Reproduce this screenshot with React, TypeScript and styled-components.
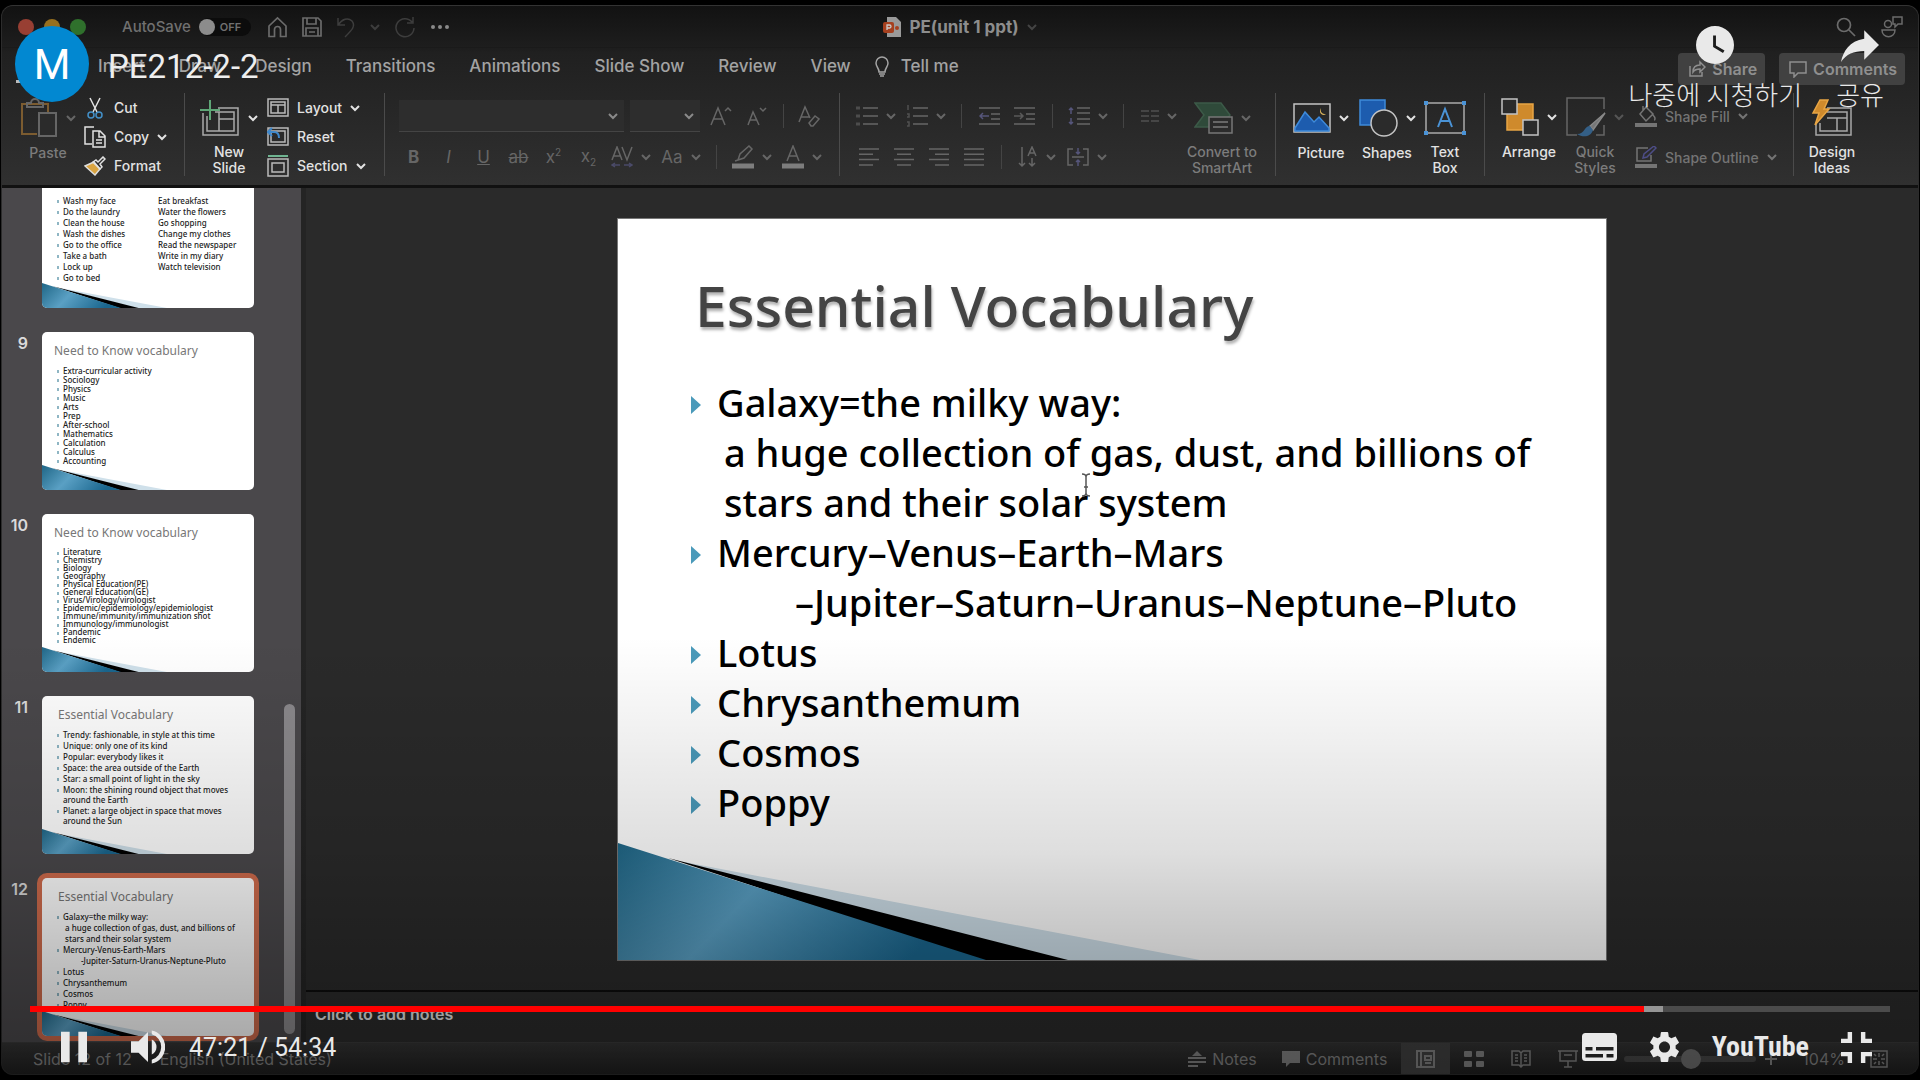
import React from "react";
import styled, { createGlobalStyle } from "styled-components";

const ui = `Inter, "Liberation Sans", sans-serif`;
const slideFont = `"Noto Sans", "Open Sans", sans-serif`;
const player = `Roboto, "Noto Sans CJK KR", sans-serif`;

const Global = createGlobalStyle`
  * { box-sizing: border-box; }
  html, body, #root { height: 100%; margin: 0; background: #000; }
  button, select, input { font: inherit; color: inherit; background: none; border: 0; padding: 0; margin: 0; }
  h1, h2, ul, p { margin: 0; padding: 0; font-weight: inherit; }
  ul { list-style: none; }
  svg { display: block; flex: none; }
`;

const Screen = styled.div`
  position: relative;
  height: 100vh;
  padding: 5px 1px;
  background: #000;
  overflow: hidden;
  font-family: ${ui};
`;
const Window = styled.div`
  height: 100%;
  display: flex;
  flex-direction: column;
  border-radius: 12px;
  border: 1px solid #2c2c2c;
  border-top-color: #333;
  overflow: hidden;
  background: #2a2a2a;
`;
const Header = styled.header`
  flex: none;
  background: linear-gradient(#121212, #1e1e1e 24%, #202020 26%, #303030);
  border-bottom: 3px solid #111;
`;
const TitleBar = styled.div`
  height: 42px;
  display: grid;
  grid-template-columns: 1fr auto 1fr;
  align-items: center;
  border-bottom: 1px solid #1a1a1a;
`;
const TitleSide = styled.div<{ $end?: boolean }>`
  display: flex;
  align-items: center;
  gap: 16px;
  padding: 0 ${(p) => (p.$end ? 14 : 16)}px;
  justify-content: ${(p) => (p.$end ? "flex-end" : "flex-start")};
  color: #6b6b6b;
`;
const Lights = styled.div`
  display: flex;
  gap: 10px;
  margin-right: 20px;
`;
const Light = styled.button<{ $c: string }>`
  width: 16px;
  height: 16px;
  border-radius: 50%;
  background: ${(p) => p.$c};
`;
const AutoSave = styled.label`
  display: flex;
  align-items: center;
  gap: 8px;
  font-size: 15px;
  font-weight: 500;
  color: #707070;
`;
const Toggle = styled.span`
  position: relative;
  width: 52px;
  height: 18px;
  border-radius: 9px;
  background: #0c0c0c;
  font-size: 11px;
  font-weight: 600;
  line-height: 18px;
  padding-left: 21px;
  input {
    position: absolute;
    inset: 0;
    width: 16px;
    height: 16px;
    appearance: none;
    border-radius: 50%;
    background: #8c8c8c;
    margin: 1px 0;
  }
`;
const Icons = styled.div`
  display: flex;
  align-items: center;
  gap: 14px;
`;
const IconBtn = styled.button<{ $c?: string }>`
  display: grid;
  place-items: center;
  color: ${(p) => p.$c || "inherit"};
`;
const DocTitle = styled.h1`
  display: flex;
  align-items: center;
  gap: 8px;
  font-size: 17px;
  font-weight: 700;
  color: #8d8d8d;
`;
const TabBar = styled.nav`
  height: 41px;
  display: flex;
  align-items: flex-start;
  justify-content: space-between;
  padding: 1px 13px 0 14px;
`;
const Tabs = styled.div`
  display: flex;
  gap: 34px;
  font-size: 17px;
  font-weight: 500;
  color: #a3a3a3;
  & > :last-child { margin-left: -10px; }
`;
const Tab = styled.button<{ $on?: boolean }>`
  display: flex;
  align-items: center;
  gap: 12px;
  height: 34px;
  border-bottom: 3px solid ${(p) => (p.$on ? "#bbb" : "transparent")};
  border-top: 3px solid transparent;
`;
const Actions = styled.div`
  display: flex;
  gap: 14px;
  padding-top: 4px;
`;
const Action = styled.button`
  display: flex;
  align-items: center;
  gap: 6px;
  height: 32px;
  padding: 0 8px 0 10px;
  border-radius: 4px;
  background: #414141;
  color: #8f8f8f;
  font-size: 16px;
  font-weight: 600;
`;
const Ribbon = styled.div`
  display: flex;
  height: 96px;
  padding-top: 4px;
`;
const Group = styled.section<{ $w?: number; $pl: number; $gap?: number }>`
  display: flex;
  flex: none;
  width: ${(p) => (p.$w ? p.$w + "px" : "auto")};
  padding-left: ${(p) => p.$pl}px;
  gap: ${(p) => p.$gap || 0}px;
  height: 83px;
  border-right: ${(p) => (p.$w ? "1px solid #4b4b4b" : "0")};
`;
const BigButton = styled.button<{ $w: number; $dim?: boolean }>`
  width: ${(p) => p.$w}px;
  display: flex;
  flex-direction: column;
  align-items: center;
  font-size: 14px;
  line-height: 16px;
  font-weight: 500;
  color: ${(p) => (p.$dim ? "#7c7c7c" : "#e2e2e2")};
`;
const BigIcon = styled.span`
  height: 50px;
  display: flex;
  align-items: center;
  gap: 8px;
  margin-bottom: 2px;
`;
const Column = styled.div`
  display: flex;
  flex-direction: column;
`;
const Small = styled.button<{ $h?: number; $dim?: boolean }>`
  flex: none;
  height: ${(p) => p.$h || 29}px;
  display: flex;
  align-items: center;
  gap: 8px;
  font-size: 14px;
  font-weight: 500;
  white-space: nowrap;
  color: ${(p) => (p.$dim ? "#747474" : "#e2e2e2")};
`;
const Row = styled.div<{ $h: number }>`
  display: flex;
  align-items: center;
  height: ${(p) => p.$h}px;
  color: #666;
`;
const Combo = styled.label<{ $w: number }>`
  display: grid;
  grid-template-columns: 1fr 16px;
  align-items: center;
  width: ${(p) => p.$w}px;
  height: 32px;
  margin: 0 3px;
  background: #2d2d2d;
  border-bottom: 1px solid #444;
  color: #8a8a8a;
  select {
    appearance: none;
    width: 100%;
    height: 30px;
  }
`;
const Cell = styled.button<{ $w?: number }>`
  width: ${(p) => p.$w || 35}px;
  display: flex;
  align-items: center;
  justify-content: center;
  gap: 8px;
  font-size: 17px;
  line-height: 20px;
  sup, sub {
    font-size: 10px;
    line-height: 10px;
  }
`;
const MiniSep = styled.span`
  width: 1px;
  height: 24px;
  margin: 0 10px;
  background: #444;
`;
const Body = styled.div`
  flex: 1;
  min-height: 0;
  display: flex;
`;
const Sidebar = styled.aside`
  flex: none;
  width: 304px;
  display: flex;
  background: #4a484b;
  border-right: 5px solid #242424;
  overflow: hidden;
`;
const ThumbList = styled.div`
  flex: 1;
  display: flex;
  flex-direction: column;
  justify-content: flex-end;
  gap: 24px;
  padding: 0 0 6px 8px;
`;
const ThumbRow = styled.div`
  flex: none;
  display: grid;
  grid-template-columns: 32px 212px;
`;
const ThumbNo = styled.span`
  padding-right: 14px;
  text-align: right;
  font-size: 16px;
  line-height: 22px;
  font-weight: 600;
  color: #dadada;
`;
const Thumb = styled.button<{ $on?: boolean }>`
  position: relative;
  display: flex;
  flex-direction: column;
  align-items: stretch;
  justify-content: flex-start;
  height: 158px;
  border-radius: 5px;
  background: #fff;
  box-shadow: ${(p) => (p.$on ? "0 0 0 5px #cf6b4c" : "none")};
  text-align: left;
  font-family: ${slideFont};
  color: #1c1c1c;
`;
const ThumbContent = styled.div`
  position: relative;
`;
const ThumbTitle = styled.h2<{ $pl: number }>`
  padding: 10px 0 0 ${(p) => p.$pl}px;
  font-size: 12px;
  line-height: 18px;
  color: #777;
`;
const ThumbText = styled.ul<{ $lh: number; $gap?: number }>`
  display: flex;
  flex-direction: column;
  gap: ${(p) => p.$gap || 0}px;
  padding: 6px 0 0 15px;
  font-size: 8px;
  font-weight: 500;
  line-height: ${(p) => p.$lh}px;
`;
const ThumbItem = styled.li<{ $indent?: number }>`
  display: grid;
  grid-template-columns: 6px 1fr;
  white-space: pre;
  padding-left: ${(p) => p.$indent || 0}px;
`;
const Tick = styled.i`
  align-self: start;
  width: 2px;
  height: 3px;
  margin-top: 4px;
  background: #8fb6c4;
`;
const TwoCols = styled.div`
  position: relative;
  display: grid;
  grid-template-columns: 95px 1fr;
  padding-top: 40px;
`;
const ThumbWave = styled.div`
  position: absolute;
  inset: 0;
  border-radius: 5px;
  overflow: hidden;
`;
const ScrollTrack = styled.div`
  width: 18px;
  display: flex;
  flex-direction: column;
  justify-content: flex-end;
  padding: 0 6px 8px 1px;
`;
const ScrollThumb = styled.div`
  height: 39%;
  border-radius: 6px;
  background: #8b898c;
`;
const Editor = styled.main`
  flex: 1;
  min-width: 0;
  display: flex;
  flex-direction: column;
`;
const Stage = styled.div`
  flex: 1;
  min-height: 0;
  display: flex;
  justify-content: center;
  align-items: center;
  border-bottom: 2px solid #0d0d0d;
`;
const Slide = styled.article`
  position: relative;
  width: 988px;
  max-width: 94%;
  aspect-ratio: 4 / 3;
  background: #fff;
  outline: 1px solid #777;
  font-family: ${slideFont};
  color: #000;
`;
const Wave = styled.svg`
  position: absolute;
  left: 0;
  bottom: 0;
  width: 100%;
  height: 100%;
`;
const SlideTitle = styled.h2`
  position: relative;
  padding: 46px 0 0 77px;
  font-size: 57px;
  font-weight: 500;
  line-height: 80px;
  color: #444;
  text-shadow: 1px 3px 3px rgba(0, 0, 0, 0.3);
`;
const SlideList = styled.ul`
  position: relative;
  padding: 32px 0 0 73px;
  font-size: 38px;
  line-height: 50px;
  font-weight: 500;
`;
const SlideItem = styled.li<{ $indent?: number }>`
  display: grid;
  grid-template-columns: 26px 1fr;
  align-items: center;
  white-space: pre;
  padding-left: ${(p) => p.$indent || 0}px;
`;
const Bullet = styled.i`
  width: 0;
  height: 0;
  margin-top: 7px;
  border: 9px solid transparent;
  border-left: 10px solid #4a9aba;
  border-right: 0;
`;
const Caret = styled.svg`
  position: absolute;
  left: 462px;
  top: 254px;
`;
const Notes = styled.div`
  flex: none;
  height: 50px;
  padding: 0 9px;
  background: #2b2b2b;
  input {
    width: 100%;
    height: 44px;
    font-size: 16px;
    font-weight: 600;
  }
  input::placeholder { color: #e6e6e6; opacity: 1; }
`;
const Status = styled.footer`
  flex: none;
  height: 32px;
  display: flex;
  justify-content: space-between;
  padding: 0 30px 0 31px;
  background: linear-gradient(#343434, #202020);
  border-top: 1px solid #3a3a3a;
  font-size: 16px;
  color: #858585;
`;
const StatusPart = styled.div<{ $gap: number }>`
  display: flex;
  align-items: center;
  gap: ${(p) => p.$gap}px;
`;
const StatusBtn = styled.button<{ $on?: boolean }>`
  height: 31px;
  display: flex;
  align-items: center;
  justify-content: center;
  gap: 6px;
  min-width: ${(p) => (p.$on ? 49 : 20)}px;
  background: ${(p) => (p.$on ? "#424242" : "none")};
`;
const ViewBtns = styled.div`
  display: flex;
  align-items: center;
  gap: 27px;
  margin-left: -11px;
  & > :first-child { margin-right: -13px; }
`;
const Zoom = styled.div`
  display: flex;
  align-items: center;
  gap: 9px;
  input {
    appearance: none;
    width: 132px;
    height: 6px;
    border-radius: 3px;
    background: #484848;
  }
  input::-webkit-slider-thumb {
    appearance: none;
    width: 20px;
    height: 20px;
    border-radius: 50%;
    background: #707070;
  }
`;

const Overlay = styled.div`
  position: absolute;
  inset: 0;
  display: flex;
  flex-direction: column;
  justify-content: space-between;
  font-family: ${player};
  color: #e9e9e9;
  background: linear-gradient(
    transparent 59%,
    rgba(0, 0, 0, 0.13) 79%,
    rgba(0, 0, 0, 0.25) 89%,
    rgba(0, 0, 0, 0.38)
  );
`;
const TopBar = styled.div`
  display: flex;
  justify-content: space-between;
  padding: 26px 36px 0 15px;
`;
const VideoInfo = styled.a`
  display: flex;
  align-items: center;
  align-self: flex-start;
  gap: 19px;
  color: #eee;
  text-decoration: none;
`;
const Avatar = styled.span`
  width: 74px;
  height: 76px;
  border-radius: 50%;
  background: #0288d1;
  color: #fff;
  font-size: 42px;
  line-height: 78px;
  text-align: center;
`;
const VideoTitle = styled.span`
  padding-top: 6px;
  font-size: 33px;
  line-height: 38px;
`;
const TopActions = styled.div`
  display: flex;
  align-items: flex-start;
  gap: 34px;
`;
const TopAction = styled.button`
  display: flex;
  flex-direction: column;
  align-items: center;
  gap: 14px;
  font-size: 26px;
  line-height: 36px;
  font-weight: 300;
`;
const Seek = styled.input`
  display: block;
  appearance: none;
  width: calc(100% - 60px);
  height: 6px;
  margin: 0 30px 2px;
  background: linear-gradient(90deg, #f00 86.8%, #959595 86.8%, #959595 87.8%, #4b4b4b 87.8%);
  &::-webkit-slider-thumb { appearance: none; width: 0; height: 0; }
`;
const Controls = styled.div`
  height: 66px;
  display: flex;
  align-items: center;
  justify-content: space-between;
  padding: 0 48px 0 61px;
`;
const ControlSet = styled.div<{ $gap: number }>`
  display: flex;
  align-items: center;
  gap: ${(p) => p.$gap}px;
`;
const Time = styled.span`
  font-size: 25px;
  margin-left: -20px;
`;
const Brand = styled.a`
  font-family: "Roboto Condensed", Roboto, sans-serif;
  font-size: 28px;
  font-weight: 700;
  line-height: 32px;
  color: #e9e9e9;
  text-decoration: none;
`;

type IconProps = { w: number; h: number; box?: string; sw?: number; fill?: string; stroke?: string; children: React.ReactNode };
const Ic = ({ w, h, box, sw = 1.5, fill = "none", stroke = "currentColor", children }: IconProps) => (
  <svg width={w} height={h} viewBox={box || `0 0 ${w} ${h}`} fill={fill} stroke={stroke} strokeWidth={sw} aria-hidden="true">
    {children}
  </svg>
);
const Chev = ({ c = "currentColor" }: { c?: string }) => (
  <Ic w={10} h={8} sw={2} stroke={c}><path d="M1 2l4 4 4-4" /></Ic>
);
const Lines = ({ xs }: { xs: [number, number][] }) => (
  <Ic w={22} h={20}>{xs.map(([a, b], i) => <path key={i} d={`M${a} ${2 + i * 5.3}H${b}`} />)}</Ic>
);
const SlideIcon = () => (
  <>
    <rect x="1" y="1" width="20" height="17" />
    <rect x="4" y="4" width="14" height="11" />
  </>
);

const WaveArt = ({ id }: { id: string }) => (
  <Wave viewBox="0 0 988 741" preserveAspectRatio="none" aria-hidden="true">
    <defs>
      <linearGradient id={id} x1="0" y1="0" x2="1" y2="0.3">
        <stop offset="0" stopColor="#1f6686" />
        <stop offset="0.45" stopColor="#5aa0c4" />
        <stop offset="1" stopColor="#1a668e" />
      </linearGradient>
    </defs>
    <path d="M61 642L582 741H440Z" fill="#cfe0ea" />
    <path d="M50 639L450 741H360Z" fill="#000" />
    <path d="M0 624L368 741H0Z" fill={`url(#${id})`} />
  </Wave>
);

const Items = ({ rows, lh, gap }: { rows: string[]; lh: number; gap?: number }) => (
  <ThumbText $lh={lh} $gap={gap}>
    {rows.map((r) => {
      const plain = r.startsWith("~");
      const deep = r.startsWith("~~");
      return (
        <ThumbItem key={r} $indent={deep ? 18 : 0}>
          {plain ? <span /> : <Tick />}
          <span>{r.replace(/^~+/, "")}</span>
        </ThumbItem>
      );
    })}
  </ThumbText>
);

const thumbs = [
  { n: 9, t: "Need to Know vocabulary", pl: 12, lh: 9, gap: 0, rows: ["Extra-curricular activity", "Sociology", "Physics", "Music", "Arts", "Prep", "After-school", "Mathematics", "Calculation", "Calculus", "Accounting"] },
  { n: 10, t: "Need to Know vocabulary", pl: 12, lh: 8, gap: 0, rows: ["Literature", "Chemistry", "Biology", "Geography", "Physical Education(PE)", "General Education(GE)", "Virus/Virology/virologist", "Epidemic/epidemiology/epidemiologist", "Immune/immunity/immunization shot", "Immunology/immunologist", "Pandemic", "Endemic"] },
  { n: 11, t: "Essential Vocabulary", pl: 16, lh: 10, gap: 1, rows: ["Trendy: fashionable, in style at this time", "Unique: only one of its kind", "Popular: everybody likes it", "Space: the area outside of the Earth", "Star: a small point of light in the sky", "Moon: the shining round object that moves\naround the Earth", "Planet: a large object in space that moves\naround the Sun"] },
  { n: 12, t: "Essential Vocabulary", pl: 16, lh: 10, gap: 1, rows: ["Galaxy=the milky way:", "~ a huge collection of gas, dust, and billions of", "~ stars and their solar system", "Mercury-Venus-Earth-Mars", "~~-Jupiter-Saturn-Uranus-Neptune-Pluto", "Lotus", "Chrysanthemum", "Cosmos", "Poppy"] },
];

const tabs = ["Home", "Insert", "Draw", "Design", "Transitions", "Animations", "Slide Show", "Review", "View"];

export default function App() {
  return (
    <>
      <Global />
      <Screen>
        <Window>
          <Header>
            <TitleBar>
              <TitleSide>
                <Lights>
                  <Light $c="#983f33" aria-label="Close" />
                  <Light $c="#97701f" aria-label="Minimize" />
                  <Light $c="#2f702c" aria-label="Zoom" />
                </Lights>
                <AutoSave>
                  AutoSave
                  <Toggle><input type="checkbox" />OFF</Toggle>
                </AutoSave>
                <Icons>
                  <IconBtn aria-label="Home"><Ic w={21} h={22} sw={1.7}><path d="M2 10l8.5-8 8.5 8v10.500h-5.500v-7a3 3 0 0 0-6 0v7H2z" /></Ic></IconBtn>
                  <IconBtn aria-label="Save"><Ic w={20} h={20} sw={1.7}><path d="M1 1h15l3 3v15H1zM5 1v6h9V1M4 19v-8h12v8M7 15h6" /></Ic></IconBtn>
                  <IconBtn aria-label="Undo" $c="#3d3d3d"><Ic w={20} h={22}><path d="M2 2v7h7M2 9c4-6 10-8 14-4 4 5 0 9-7 16" /></Ic></IconBtn>
                  <IconBtn aria-label="Undo history" $c="#3d3d3d"><Chev /></IconBtn>
                  <IconBtn aria-label="Redo" $c="#3d3d3d"><Ic w={22} h={22}><path d="M19 1v6h-6M18 6a9 9 0 1 0 2 6" /></Ic></IconBtn>
                  <IconBtn aria-label="More" $c="#8a8a8a"><Ic w={20} h={6} fill="currentColor" stroke="none"><circle cx="3" cy="3" r="2" /><circle cx="10" cy="3" r="2" /><circle cx="17" cy="3" r="2" /></Ic></IconBtn>
                </Icons>
              </TitleSide>
              <DocTitle>
                <Ic w={18} h={20} stroke="none">
                  <path d="M4 0h9l5 5v15H4z" fill="#9a9a9a" />
                  <rect y="5" width="11" height="11" rx="2" fill="#a6401f" />
                  <path d="M4 13V8h2.500a1.500 1.500 0 0 1 0 3H4" fill="none" stroke="#ccc" strokeWidth="1.3" />
                  <circle cx="14" cy="11" r="2" fill="#a6401f" />
                </Ic>
                PE(unit 1 ppt)
                <Chev c="#444" />
              </DocTitle>
              <TitleSide $end>
                <IconBtn aria-label="Search"><Ic w={20} h={20} sw={1.7}><circle cx="8" cy="8" r="6.5" /><path d="M13 13l6 6" /></Ic></IconBtn>
                <IconBtn aria-label="Account"><Ic w={32} h={24} box="-9 0 32 24"><circle cx="7" cy="9" r="3.5" /><path d="M1 15h13c0 9-13 9-13 0zM12 2h9v7h-4l-3 3V9h-2z" /></Ic></IconBtn>
              </TitleSide>
            </TitleBar>

            <TabBar>
              <Tabs>
                {tabs.map((t) => <Tab key={t} $on={t === "Home"}>{t}</Tab>)}
                <Tab>
                  <Ic w={14} h={21}><path d="M4 16c0-4-3-5-3-9a6 6 0 0 1 12 0c0 4-3 5-3 9zM4 18h6M5 20h4" /></Ic>
                  Tell me
                </Tab>
              </Tabs>
              <Actions>
                <Action><Ic w={18} h={18}><path d="M2 6v10h12v-4M5 12c0-5 3-7 7-7V2l5 5-5 5V9c-3 0-5 0-7 3z" /></Ic>Share</Action>
                <Action><Ic w={18} h={18}><path d="M1 2h16v11H9l-4 4v-4H1z" /></Ic>Comments</Action>
              </Actions>
            </TabBar>

            <Ribbon>
              <Group $w={183} $pl={18} $gap={8}>
                <BigButton $w={56} $dim>
                  <BigIcon>
                    <Ic w={38} h={40} sw={2}>
                      <path d="M17 36H2V6h26v8" stroke="#7c5c30" />
                      <path d="M7 9V5h4a4 4 0 0 1 8 0h4v4z" stroke="#666" />
                      <rect x="19" y="15" width="17" height="23" fill="#2b2b2b" stroke="#666" />
                    </Ic>
                    <Chev c="#666" />
                  </BigIcon>
                  Paste
                </BigButton>
                <Column>
                  <Small>
                    <Ic w={22} h={22}><path d="M6 1l7 14M16 1L9 15" /><circle cx="7" cy="18" r="3" stroke="#4390c8" /><circle cx="15" cy="18" r="3" stroke="#4390c8" /></Ic>
                    Cut
                  </Small>
                  <Small>
                    <Ic w={22} h={22}><path d="M8 18H1V1h9" /><path d="M9 5h7l5 5v11H9zM15 5v6h6M12 14h6M12 17h6" /></Ic>
                    Copy <Chev />
                  </Small>
                  <Small>
                    <Ic w={22} h={20}><path d="M1 10l9-4 6 7-5 6z" fill="#d9a441" stroke="#ddd" /><path d="M9 6l3-2 2 2 5-5 2 2-5 5 2 3-2 2z" /></Ic>
                    Format
                  </Small>
                </Column>
              </Group>

              <Group $w={200} $pl={15} $gap={9}>
                <BigButton $w={58}>
                  <BigIcon>
                    <Ic w={40} h={38} stroke="#aaa">
                      <path d="M18 9h20v27H3V14" /><path d="M15 13h19v19H7V17M19 13v19M19 20h15" />
                      <path d="M10 1v20M0 11h20" stroke="#5fa777" strokeWidth="2" />
                    </Ic>
                    <Chev />
                  </BigIcon>
                  New<br />Slide
                </BigButton>
                <Column>
                  <Small><Ic w={22} h={19} stroke="#bbb"><SlideIcon /><path d="M4 7h14M11 7v8" /></Ic>Layout <Chev /></Small>
                  <Small><Ic w={22} h={19} stroke="#bbb"><SlideIcon /><path d="M1 5h6c4 0 5 3 5 6M5 1L1 5l4 4" stroke="#3e88cc" strokeWidth="2" /></Ic>Reset</Small>
                  <Small><Ic w={22} h={23} stroke="#bbb"><path d="M1 2h20" stroke="#6fb491" strokeWidth="2" /><rect x="1" y="5" width="20" height="17" /><rect x="5" y="9" width="12" height="9" /></Ic>Section <Chev /></Small>
                </Column>
              </Group>

              <Group $w={455} $pl={11}>
                <Column>
                  <Row $h={46}>
                    <Combo $w={225}><select aria-label="Font"><option /></select><Chev /></Combo>
                    <Combo $w={70}><select aria-label="Font size"><option /></select><Chev /></Combo>
                    <Cell aria-label="Grow font"><Ic w={22} h={22}><path d="M1 20L8 3l7 17M4 14h8M15 6l3-3 3 3" /></Ic></Cell>
                    <Cell aria-label="Shrink font"><Ic w={22} h={22}><path d="M3 20l5-13 6 13M5 15h7M15 3l3 3 3-3" /></Ic></Cell>
                    <MiniSep />
                    <Cell $w={30} aria-label="Clear formatting"><Ic w={22} h={22}><path d="M1 17L7 2l5 11M3 12h8M11 18l6-7 4 3-6 7h-2z" /></Ic></Cell>
                  </Row>
                  <Row $h={36}>
                    <Cell><b>B</b></Cell>
                    <Cell><i>I</i></Cell>
                    <Cell><u>U</u></Cell>
                    <Cell><s>ab</s></Cell>
                    <Cell aria-label="Superscript"><span>x<sup>2</sup></span></Cell>
                    <Cell aria-label="Subscript"><span>x<sub>2</sub></span></Cell>
                    <Cell $w={50} aria-label="Character spacing"><Ic w={22} h={22}><path d="M1 14L6 1l5 13M3 10h6M11 1l5 13 5-13" /><path d="M1 19h8M13 19h8M4 17l-3 2 3 2M18 17l3 2-3 2" stroke="#4a4a68" /></Ic><Chev /></Cell>
                    <Cell $w={50}>Aa<Chev /></Cell>
                    <MiniSep />
                    <Cell $w={50} aria-label="Highlight"><Ic w={22} h={24}><path d="M6 15l2-6 9-8 3 3-8 9-6 2-3 1" /><path d="M0 21h22" strokeWidth="5" stroke="#7d7d7d" /></Ic><Chev /></Cell>
                    <Cell $w={50} aria-label="Font color"><Ic w={22} h={24}><path d="M5 16l6-15 6 15M7 11h8" /><path d="M0 21h22" strokeWidth="5" stroke="#7d7d7d" /></Ic><Chev /></Cell>
                  </Row>
                </Column>
              </Group>

              <Group $w={436} $pl={11}>
                <Column>
                  <Row $h={46}>
                    <Cell $w={50} aria-label="Bullets"><Ic w={22} h={22}><path d="M7 3h15M7 11h15M7 19h15" /><path d="M0 3h4M0 11h4M0 19h4" strokeWidth="3" stroke="#4c4c4c" /></Ic><Chev /></Cell>
                    <Cell $w={50} aria-label="Numbering"><Ic w={22} h={22}><path d="M7 3h15M7 11h15M7 19h15" /><path d="M2 0v5M1 9h2v3H1M1 17h2v4H1" stroke="#505050" /></Ic><Chev /></Cell>
                    <MiniSep />
                    <Cell aria-label="Decrease indent"><Ic w={21} h={20}><path d="M0 2h21M12 8h9M12 13h9M0 18h21" /><path d="M10 10H1M4 7l-3 3 3 3" stroke="#55557a" /></Ic></Cell>
                    <Cell aria-label="Increase indent"><Ic w={21} h={20}><path d="M0 2h21M12 8h9M12 13h9M0 18h21" /><path d="M0 10h9M6 7l3 3-3 3" stroke="#5a5a5a" /></Ic></Cell>
                    <MiniSep />
                    <Cell $w={50} aria-label="Line spacing"><Ic w={22} h={20}><path d="M9 2h13M9 7h13M9 13h13M9 18h13" /><path d="M3 8V2M1 4l2-2 2 2M3 12v6M1 16l2 2 2-2" stroke="#55557a" /></Ic><Chev /></Cell>
                    <MiniSep />
                    <Cell $w={50} aria-label="Columns"><Ic w={18} h={14}><path d="M0 2h8M0 7h8M0 12h8M10 2h8M10 7h8M10 12h8" stroke="#505050" /></Ic><Chev /></Cell>
                  </Row>
                  <Row $h={36}>
                    <Cell aria-label="Align left"><Lines xs={[[1, 21], [1, 15], [1, 21], [1, 15]]} /></Cell>
                    <Cell aria-label="Center"><Lines xs={[[1, 21], [4, 18], [1, 21], [4, 18]]} /></Cell>
                    <Cell aria-label="Align right"><Lines xs={[[1, 21], [7, 21], [1, 21], [7, 21]]} /></Cell>
                    <Cell aria-label="Justify"><Lines xs={[[1, 21], [1, 21], [1, 21], [1, 21]]} /></Cell>
                    <MiniSep />
                    <Cell $w={50} aria-label="Text direction"><Ic w={20} h={22}><path d="M4 1v19M1 17l3 3 3-3M10 10l4-9 4 9M11 7h6M14 12v8M11 17l3 3 3-3" /></Ic><Chev /></Cell>
                    <Cell $w={50} aria-label="Align text"><Ic w={22} h={20}><path d="M6 2H1v16h5M16 2h5v16h-5M5 10h12" /><path d="M11 1v6M11 13v6M9 5l2 2 2-2M9 15l2-2 2 2" stroke="#55557a" /></Ic><Chev /></Cell>
                  </Row>
                </Column>
                <BigButton $w={76} $dim>
                  <BigIcon>
                    <Ic w={39} h={32}><path d="M1 1h26l9 12-9 12H1l9-12z" fill="#2f4a3a" stroke="#3c5a48" /><rect x="15" y="15" width="23" height="16" fill="#2b2b2b" stroke="#777" /><path d="M19 20h15M19 25h15" /></Ic>
                    <Chev c="#666" />
                  </BigIcon>
                  Convert to<br />SmartArt
                </BigButton>
              </Group>

              <Group $w={209} $pl={12}>
                <BigButton $w={66}>
                  <BigIcon>
                    <Ic w={38} h={30}><rect x="1" y="1" width="36" height="28" stroke="#c4c4c4" /><path d="M2 25L12 9l9 10 5-5 10 11v3H2z" fill="#1d5cae" stroke="#3e8ada" /><path d="M28 5c-1 4 1 6 5 6-4 3-8-2-5-6z" fill="#d8b45c" stroke="none" /></Ic>
                    <Chev />
                  </BigIcon>
                  Picture
                </BigButton>
                <BigButton $w={66}>
                  <BigIcon>
                    <Ic w={39} h={38}><rect x="1" y="1" width="25" height="25" fill="#1d5cae" stroke="#3e8ada" /><circle cx="25" cy="24" r="13" fill="#2b2b2b" stroke="#c4c4c4" /></Ic>
                    <Chev />
                  </BigIcon>
                  Shapes
                </BigButton>
                <BigButton $w={50}>
                  <BigIcon>
                    <Ic w={42} h={34}><rect x="2" y="2" width="38" height="30" stroke="#aaa" /><path d="M14 26l7-18 7 18M16 20h10" stroke="#4a93d6" strokeWidth="2" /><path d="M0 2h4M38 2h4M0 32h4M38 32h4" stroke="#4a93d6" strokeWidth="4" /></Ic>
                  </BigIcon>
                  Text<br />Box
                </BigButton>
              </Group>

              <Group $w={309} $pl={11} $gap={7}>
                <Row $h={82}>
                  <BigButton $w={66}>
                    <BigIcon>
                      <Ic w={38} h={38}><rect x="6" y="6" width="26" height="26" fill="#cf8a2c" stroke="#e8a544" /><rect x="1" y="1" width="15" height="15" fill="#2b2b2b" stroke="#c4c4c4" /><rect x="22" y="22" width="15" height="15" fill="#2b2b2b" stroke="#c4c4c4" /></Ic>
                      <Chev />
                    </BigIcon>
                    Arrange<br />&nbsp;
                  </BigButton>
                  <BigButton $w={66} $dim>
                    <BigIcon>
                      <Ic w={40} h={40}><path d="M38 12V1H1v37h10M30 38h8V28" stroke="#666" /><path d="M39 16L24 29l3 4z" fill="#777" stroke="#888" /><path d="M24 29c-6 0-5 8-13 8 6 4 14 3 16-4z" fill="#345f86" stroke="none" /></Ic>
                      <Chev c="#555" />
                    </BigIcon>
                    Quick<br />Styles
                  </BigButton>
                </Row>
                <Column>
                  <Small $h={46} $dim><Ic w={22} h={22}><path d="M5 9l6-7 7 7-7 7zM18 10c3 3 2 5 1 5M8 6V1" /><path d="M0 20h22" strokeWidth="4" /></Ic>Shape Fill <Chev /></Small>
                  <Small $h={36} $dim><Ic w={22} h={22}><path d="M13 2H2v13h14V9" /><path d="M8 12l1-4 10-8 2 2-9 9z" stroke="#4d4d86" /><path d="M0 20h22" strokeWidth="4" /></Ic>Shape Outline <Chev /></Small>
                </Column>
              </Group>

              <Group $pl={12}>
                <BigButton $w={52}>
                  <BigIcon>
                    <Ic w={42} h={38} stroke="#a8a8a8"><path d="M16 9h24v27H5V24M16 13h20v19H9V24M16 19h20M26 19v13" /><path d="M9 1h8l-4 9h5L4 26l4-12H2z" fill="#cf8a2c" stroke="#e8a544" /></Ic>
                  </BigIcon>
                  Design<br />Ideas
                </BigButton>
              </Group>
            </Ribbon>
          </Header>

          <Body>
            <Sidebar>
              <ThumbList>
                <ThumbRow>
                  <ThumbNo />
                  <Thumb aria-label="Slide 8">
                    <ThumbWave><WaveArt id="w8" /></ThumbWave>
                    <TwoCols>
                      <Items lh={10} gap={1} rows={["Wash my face", "Do the laundry", "Clean the house", "Wash the dishes", "Go to the office", "Take a bath", "Lock up", "Go to bed"]} />
                      <Items lh={10} gap={1} rows={["~Eat breakfast", "~Water the flowers", "~Go shopping", "~Change my clothes", "~Read the newspaper", "~Write in my diary", "~Watch television"]} />
                    </TwoCols>
                  </Thumb>
                </ThumbRow>
                {thumbs.map((s) => (
                  <ThumbRow key={s.n}>
                    <ThumbNo>{s.n}</ThumbNo>
                    <Thumb $on={s.n === 12}>
                      <ThumbWave>
                        <WaveArt id={`w${s.n}`} />
                      </ThumbWave>
                      <ThumbContent>
                        <ThumbTitle $pl={s.pl}>{s.t}</ThumbTitle>
                        <Items rows={s.rows} lh={s.lh} gap={s.gap} />
                      </ThumbContent>
                    </Thumb>
                  </ThumbRow>
                ))}
              </ThumbList>
              <ScrollTrack><ScrollThumb /></ScrollTrack>
            </Sidebar>

            <Editor>
              <Stage>
                <Slide>
                  <WaveArt id="main" />
                  <SlideTitle>Essential Vocabulary</SlideTitle>
                  <SlideList>
                    <SlideItem><Bullet /><span>Galaxy=the milky way:</span></SlideItem>
                    <SlideItem $indent={7}><span /><span>a huge collection of gas, dust, and billions of</span></SlideItem>
                    <SlideItem $indent={7}><span /><span>stars and their solar system</span></SlideItem>
                    <SlideItem><Bullet /><span>Mercury–Venus–Earth–Mars</span></SlideItem>
                    <SlideItem $indent={78}><span /><span>–Jupiter–Saturn–Uranus–Neptune–Pluto</span></SlideItem>
                    {["Lotus", "Chrysanthemum", "Cosmos", "Poppy"].map((w) => (
                      <SlideItem key={w}><Bullet /><span>{w}</span></SlideItem>
                    ))}
                  </SlideList>
                  <Caret width="12" height="24" viewBox="0 0 12 24" fill="none" stroke="#555" strokeWidth="1.5">
                    <path d="M2 1c3 0 4 1 4 3 0-2 1-3 4-3M6 4v16M2 23c3 0 4-1 4-3 0 2 1 3 4 3M4 14h4" />
                  </Caret>
                </Slide>
              </Stage>
              <Notes><input aria-label="Notes" placeholder="Click to add notes" /></Notes>
            </Editor>
          </Body>

          <Status>
            <StatusPart $gap={28}>
              <span>Slide 12 of 12</span>
              <span>English (United States)</span>
            </StatusPart>
            <StatusPart $gap={25}>
              <StatusBtn><Ic w={18} h={18} sw={2}><path d="M0 8h18M0 12h18M0 16h10" /><path d="M4 6l5-5 5 5z" fill="currentColor" stroke="none" /></Ic>Notes</StatusBtn>
              <StatusBtn><Ic w={18} h={16} stroke="none"><path d="M0 0h18v12H8l-4 4v-4H0z" fill="currentColor" /></Ic>Comments</StatusBtn>
              <ViewBtns>
                <StatusBtn $on aria-label="Normal view"><Ic w={19} h={18} sw={2}><rect x="1" y="1" width="17" height="16" /><path d="M5 1v16M9 6h6v4H9zM9 13h6" /></Ic></StatusBtn>
                <StatusBtn aria-label="Slide sorter"><Ic w={20} h={16} stroke="none" fill="currentColor"><rect width="8" height="6" rx="1" /><rect x="12" width="8" height="6" rx="1" /><rect y="10" width="8" height="6" rx="1" /><rect x="12" y="10" width="8" height="6" rx="1" /></Ic></StatusBtn>
                <StatusBtn aria-label="Reading view"><Ic w={20} h={18}><path d="M10 3L8 1H1v14h7l2 2 2-2h7V1h-7zM10 3v14M4 5h3M4 8h3M4 11h3M13 5h3M13 8h3M13 11h3" /></Ic></StatusBtn>
                <StatusBtn aria-label="Slide show"><Ic w={20} h={18}><path d="M0 1h20M2 1v10h16V1M10 11v6M6 17h8M6 5h8" /></Ic></StatusBtn>
              </ViewBtns>
              <Zoom>
                <IconBtn aria-label="Zoom out"><Ic w={12} h={12} sw={2}><path d="M0 6h12" /></Ic></IconBtn>
                <input type="range" aria-label="Zoom" min="0" max="100" defaultValue="51" />
                <IconBtn aria-label="Zoom in"><Ic w={12} h={12} sw={2}><path d="M0 6h12M6 0v12" /></Ic></IconBtn>
              </Zoom>
              <span>104%</span>
              <IconBtn aria-label="Fit to window"><Ic w={18} h={18}><rect x="1" y="1" width="16" height="16" /><path d="M9 3v4M9 11v4M3 9h4M11 9h4M4 4l2 2M14 4l-2 2M4 14l2-2M14 14l-2-2" /></Ic></IconBtn>
            </StatusPart>
          </Status>
        </Window>

        <Overlay>
          <TopBar>
            <VideoInfo href="#video"><Avatar>M</Avatar><VideoTitle>PE212-2-2</VideoTitle></VideoInfo>
            <TopActions>
              <TopAction>
                <Ic w={38} h={38} box="2 2 20 20" stroke="none" fill="currentColor"><path fillRule="evenodd" d="M12 2a10 10 0 1 0 0 20 10 10 0 0 0 0-20zm4.2 14.2L11 13V7h1.500v5.200l4.500 2.700z" /></Ic>
                나중에 시청하기
              </TopAction>
              <TopAction>
                <Ic w={38} h={38} box="3 3 18 18" stroke="none" fill="currentColor"><path d="M14 5l7 7-7 7v-4.100c-5 0-8.500 1.600-11 5.100 1-5 4-10 11-11z" /></Ic>
                공유
              </TopAction>
            </TopActions>
          </TopBar>
          <div>
            <Seek type="range" aria-label="Seek" min="0" max="3274" defaultValue="2841" />
            <Controls>
              <ControlSet $gap={44}>
                <IconBtn aria-label="Pause"><Ic w={26} h={32} box="6 5 12 14" stroke="none" fill="currentColor"><path d="M6 19h4V5H6zM14 5v14h4V5z" /></Ic></IconBtn>
                <IconBtn aria-label="Mute"><Ic w={34} h={34} box="3 3 18 18" stroke="none" fill="currentColor"><path d="M3 9v6h4l5 5V4L7 9zM16.500 12A4.500 4.500 0 0 0 14 8v8c1.500-.7 2.500-2.200 2.500-4zM14 3.200v2.100a7 7 0 0 1 0 13.400v2.100a9 9 0 0 0 0-17.600z" /></Ic></IconBtn>
                <Time>47:21 / 54:34</Time>
              </ControlSet>
              <ControlSet $gap={32}>
                <IconBtn aria-label="Subtitles"><Ic w={35} h={28} box="2 4 20 16" stroke="none" fill="currentColor"><path fillRule="evenodd" d="M20 4H4a2 2 0 0 0-2 2v12a2 2 0 0 0 2 2h16a2 2 0 0 0 2-2V6a2 2 0 0 0-2-2zM4 12h4v2H4zm10 6H4v-2h10zm6 0h-4v-2h4zm0-4H10v-2h10z" /></Ic></IconBtn>
                <IconBtn aria-label="Settings"><Ic w={31} h={32} box="2 2 20 20" stroke="none" fill="currentColor"><path d="M19.140 12.940c.04-.3.06-.61.06-.94 0-.32-.02-.64-.07-.94l2.030-1.580c.18-.14.23-.41.12-.61l-1.920-3.320c-.12-.22-.37-.29-.59-.22l-2.390.96c-.5-.38-1.030-.7-1.620-.94l-.36-2.540c-.04-.24-.24-.41-.48-.41h-3.840c-.24 0-.43.17-.47.41l-.36 2.540c-.59.24-1.130.57-1.620.94l-2.390-.96c-.22-.08-.47 0-.59.22L2.740 8.870c-.12.21-.08.47.12.61l2.030 1.580c-.05.3-.09.63-.09.94s.02.64.07.94l-2.030 1.580c-.18.14-.23.41-.12.61l1.920 3.320c.12.22.37.29.59.22l2.390-.96c.5.38 1.030.7 1.620.94l.36 2.540c.05.24.24.41.48.41h3.840c.24 0 .44-.17.47-.41l.36-2.540c.59-.24 1.130-.56 1.620-.94l2.390.96c.22.08.47 0 .59-.22l1.920-3.320c.12-.22.07-.47-.12-.61l-2.010-1.580zM12 15.600c-1.980 0-3.600-1.620-3.600-3.600s1.620-3.600 3.600-3.600 3.600 1.620 3.600 3.600-1.620 3.600-3.600 3.600z" /></Ic></IconBtn>
                <Brand href="#youtube">YouTube</Brand>
                <IconBtn aria-label="Exit full screen"><Ic w={31} h={31} box="5 5 14 14" stroke="none" fill="currentColor"><path d="M5 16h3v3h2v-5H5zM8 8H5v2h5V5H8zM14 19h2v-3h3v-2h-5zM16 8V5h-2v5h5V8z" /></Ic></IconBtn>
              </ControlSet>
            </Controls>
          </div>
        </Overlay>
      </Screen>
    </>
  );
}
